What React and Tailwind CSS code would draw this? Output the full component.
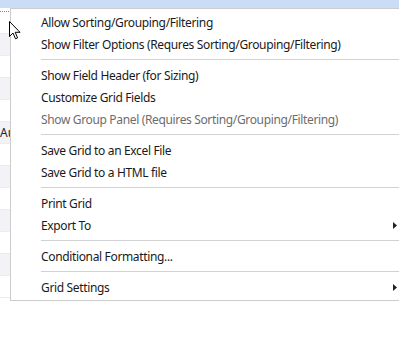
const items = [
  { label: 'Allow Sorting/Grouping/Filtering' },
  { label: 'Show Filter Options (Requres Sorting/Grouping/Filtering)' },
  { sep: true },
  { label: 'Show Field Header (for Sizing)' },
  { label: 'Customize Grid Fields' },
  { label: 'Show Group Panel (Requires Sorting/Grouping/Filtering)', disabled: true },
  { sep: true },
  { label: 'Save Grid to an Excel File' },
  { label: 'Save Grid to a HTML file' },
  { sep: true },
  { label: 'Print Grid' },
  { label: 'Export To', sub: true },
  { sep: true },
  { label: 'Conditional Formatting...' },
  { sep: true },
  { label: 'Grid Settings', sub: true },
]

const rows = ['white', 'grey', 'white', 'grey', 'white', 'grey', 'white', 'grey', 'white', 'grey', 'white', 'grey', 'white']

function Cursor() {
  return (
    <svg className="absolute left-[9px] top-[21px] z-10" width="12" height="19" viewBox="0 0 12 19">
      <path d="M0.5 0.5 L0.5 15.5 L4 12 L6.5 17.8 L8.6 16.9 L6.2 11.3 L11 11.3 Z" fill="#fff" stroke="#000" strokeWidth="1" strokeLinejoin="miter" />
    </svg>
  )
}

export default function App() {
  return (
    <div className="relative w-[399px] h-[363px] overflow-hidden bg-white" style={{ fontFamily: '"Segoe UI", "Noto Sans", "Open Sans", sans-serif' }}>
      {/* grid behind the menu */}
      <div className="flex flex-col">
        <div className="h-[8px] bg-[#cbdcf5]" />
        <div className="h-[4px] border-b border-dotted border-[#7a8aa8]" />
        {rows.map((r, i) => (
          <div
            key={i}
            className={(r === 'grey' ? 'bg-[#f3f3f7] ' : 'bg-white ') + 'h-[22px] border-b border-[#ececec] text-[12px] text-[#222] leading-[22px]'}
          >
            {i === 5 ? 'Au' : ''}
          </div>
        ))}
      </div>

      {/* context menu */}
      <div className="absolute left-[10px] top-[8px] w-[400px] bg-white border border-[#cccccc] pt-[2px] pb-[2px] text-[12px] tracking-[-0.35px] text-[#1a1a1a]">
        {items.map((it, i) =>
          it.sep ? (
            <div key={i} className="h-[9px] flex items-center pl-[30px]">
              <div className="h-px w-full bg-[#d2d2d2]" />
            </div>
          ) : (
            <div key={i} className="h-[22px] flex items-center pl-[30px] pr-[12px] pt-px">
              <span className={'flex-1 whitespace-nowrap ' + (it.disabled ? 'text-[#6d6d6d]' : '')}>{it.label}</span>
              {it.sub && (
                <svg width="4" height="7" viewBox="0 0 4 7">
                  <path d="M0 0 L4 3.5 L0 7 Z" fill="#222" />
                </svg>
              )}
            </div>
          )
        )}
      </div>
      <Cursor />
    </div>
  )
}
